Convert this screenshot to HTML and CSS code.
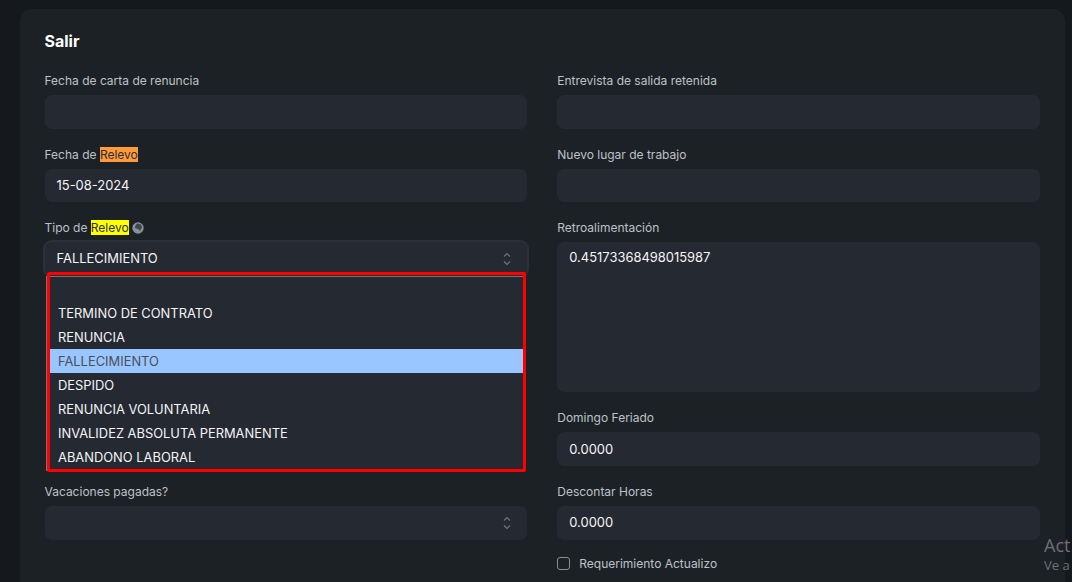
FILE: index.html
```html
<!DOCTYPE html>
<html lang="es">
<head>
<meta charset="utf-8">
<title>Salir</title>
<link rel="stylesheet" href="styles.css">
</head>
<body>
<main class="card">
  <h2 class="title">Salir</h2>
  <div class="columns">
    <div class="col">
      <div class="field">
        <label class="label">Fecha de carta de renuncia</label>
        <div class="input"></div>
      </div>
      <div class="field field-nudge">
        <label class="label">Fecha de <mark class="hl-orange">Relevo</mark></label>
        <div class="input">15-08-2024</div>
      </div>
      <div class="field field-open">
        <label class="label">Tipo de <mark class="hl-yellow">Relevo</mark>
          <svg class="globe" viewBox="0 0 12 12" width="12" height="12"><circle cx="6" cy="6" r="5.7" fill="#8a9099"/><path d="M5 1.5 9 2.5 10 5.5 8 9 6 7 3 6 3.5 3.5Z" fill="#3f454d"/></svg>
        </label>
        <div class="input select select-focus">FALLECIMIENTO
          <svg class="chev" viewBox="0 0 8 14" width="8" height="14"><path d="M1 4.5 4 1.5 7 4.5M1 9.5 4 12.5 7 9.5" fill="none" stroke="#6f757e" stroke-width="1.2"/></svg>
        </div>
        <ul class="dropdown">
          <li class="opt">&nbsp;</li>
          <li class="opt">TERMINO DE CONTRATO</li>
          <li class="opt">RENUNCIA</li>
          <li class="opt opt-active">FALLECIMIENTO</li>
          <li class="opt">DESPIDO</li>
          <li class="opt">RENUNCIA VOLUNTARIA</li>
          <li class="opt">INVALIDEZ ABSOLUTA PERMANENTE</li>
          <li class="opt">ABANDONO LABORAL</li>
        </ul>
        <div class="redbox"></div>
      </div>
      <div class="field field-nudge">
        <label class="label">Vacaciones pagadas?</label>
        <div class="input select">
          <svg class="chev" viewBox="0 0 8 14" width="8" height="14"><path d="M1 4.5 4 1.5 7 4.5M1 9.5 4 12.5 7 9.5" fill="none" stroke="#6f757e" stroke-width="1.2"/></svg>
        </div>
      </div>
    </div>
    <div class="col">
      <div class="field">
        <label class="label">Entrevista de salida retenida</label>
        <div class="input"></div>
      </div>
      <div class="field field-nudge">
        <label class="label">Nuevo lugar de trabajo</label>
        <div class="input"></div>
      </div>
      <div class="field">
        <label class="label">Retroalimentación</label>
        <div class="input textarea">0.45173368498015987</div>
      </div>
      <div class="field field-sunday">
        <label class="label">Domingo Feriado</label>
        <div class="input">0.0000</div>
      </div>
      <div class="field field-nudge field-tight">
        <label class="label">Descontar Horas</label>
        <div class="input">0.0000</div>
      </div>
      <div class="check">
        <span class="box"></span>
        <span class="check-label">Requerimiento Actualizo</span>
      </div>
    </div>
  </div>
</main>
<aside class="activate">
  <div class="activate-title">Act</div>
  <div class="activate-sub">Ve a</div>
</aside>
</body>
</html>
```

FILE: styles.css
```css
html, body {
  margin: 0;
  height: 582px;
  overflow: hidden;
}
body {
  background: #15181c;
  font-family: Inter, "Liberation Sans", sans-serif;
  color: #f4f5f6;
  padding: 9px 7px 0 20px;
  box-sizing: border-box;
}
.card {
  background: #1c2126;
  border-radius: 12px 12px 0 0;
  padding: 23px 25px 0 24.5px;
  height: 573px;
  box-sizing: border-box;
  overflow: hidden;
}
.title {
  margin: 0 0 23.7px;
  font-size: 16px;
  line-height: 18px;
  font-weight: 700;
  color: #fff;
}
.columns {
  display: grid;
  grid-template-columns: 1fr 1fr;
  gap: 30px;
}
.field {
  position: relative;
  margin-bottom: 18.5px;
}
.field-nudge {
  margin-top: 19.2px;
}
.field-nudge .label {
  height: 20.8px;
}
.field-sunday {
  margin-bottom: 18.5px;
}
.field-sunday .input {
  line-height: 35px;
}
.field-tight {
  margin-bottom: 16.5px;
}
.field-open {
  margin-bottom: 209.2px;
}
.label {
  display: block;
  height: 21.5px;
  line-height: 14px;
  font-size: 12px;
  color: #bcc1c8;
}
.label mark {
  color: #2b2f36;
  padding: 0;
}
.hl-orange { background: #ff9a3c; }
.hl-yellow { background: #ffff00; }
.globe {
  vertical-align: -2px;
  margin-left: 0;
}
.input {
  height: 33.6px;
  line-height: 33.6px;
  padding: 0 12px;
  box-sizing: border-box;
  background: #252932;
  border-radius: 7px;
  font-size: 12.95px;
  font-weight: 430;
  color: #f4f5f6;
}
.select {
  position: relative;
}
.select-focus {
  box-shadow: 0 0 0 2px #2b303a;
}
.chev {
  position: absolute;
  right: 16px;
  top: 10px;
}
.textarea {
  height: 150px;
  line-height: 30px;
}
.dropdown {
  position: absolute;
  left: 1px;
  right: 2px;
  top: 55px;
  z-index: 2;
  margin: 0;
  padding: 0;
  list-style: none;
  background: #252932;
  border: 1px solid #777;
  height: 193px;
  overflow: hidden;
}
.opt {
  height: 24px;
  line-height: 26px;
  padding-left: 11.5px;
  font-size: 12.9px;
  font-weight: 430;
  color: #f4f5f6;
}
.opt-active {
  background: #99c6ff;
  color: #4a4f58;
  font-weight: 400;
}
.redbox {
  position: absolute;
  left: 2px;
  right: 1px;
  top: 51.6px;
  height: 193.5px;
  border: 3px solid #ff0000;
  border-radius: 2px;
  z-index: 3;
}
.check {
  display: flex;
  align-items: center;
  gap: 9px;
}
.box {
  width: 13px;
  height: 13px;
  border: 1px solid #8a8f96;
  border-radius: 3px;
  box-sizing: border-box;
}
.check-label {
  font-size: 12px;
  color: #bcc1c8;
}
.activate {
  position: absolute;
  left: 1044px;
  top: 534px;
  white-space: nowrap;
  color: #6d7075;
}
.activate-title {
  font-family: "Open Sans", sans-serif;
  font-size: 18px;
  line-height: 22px;
}
.activate-sub {
  font-family: "Open Sans", sans-serif;
  font-size: 13px;
  line-height: 18px;
}
```
